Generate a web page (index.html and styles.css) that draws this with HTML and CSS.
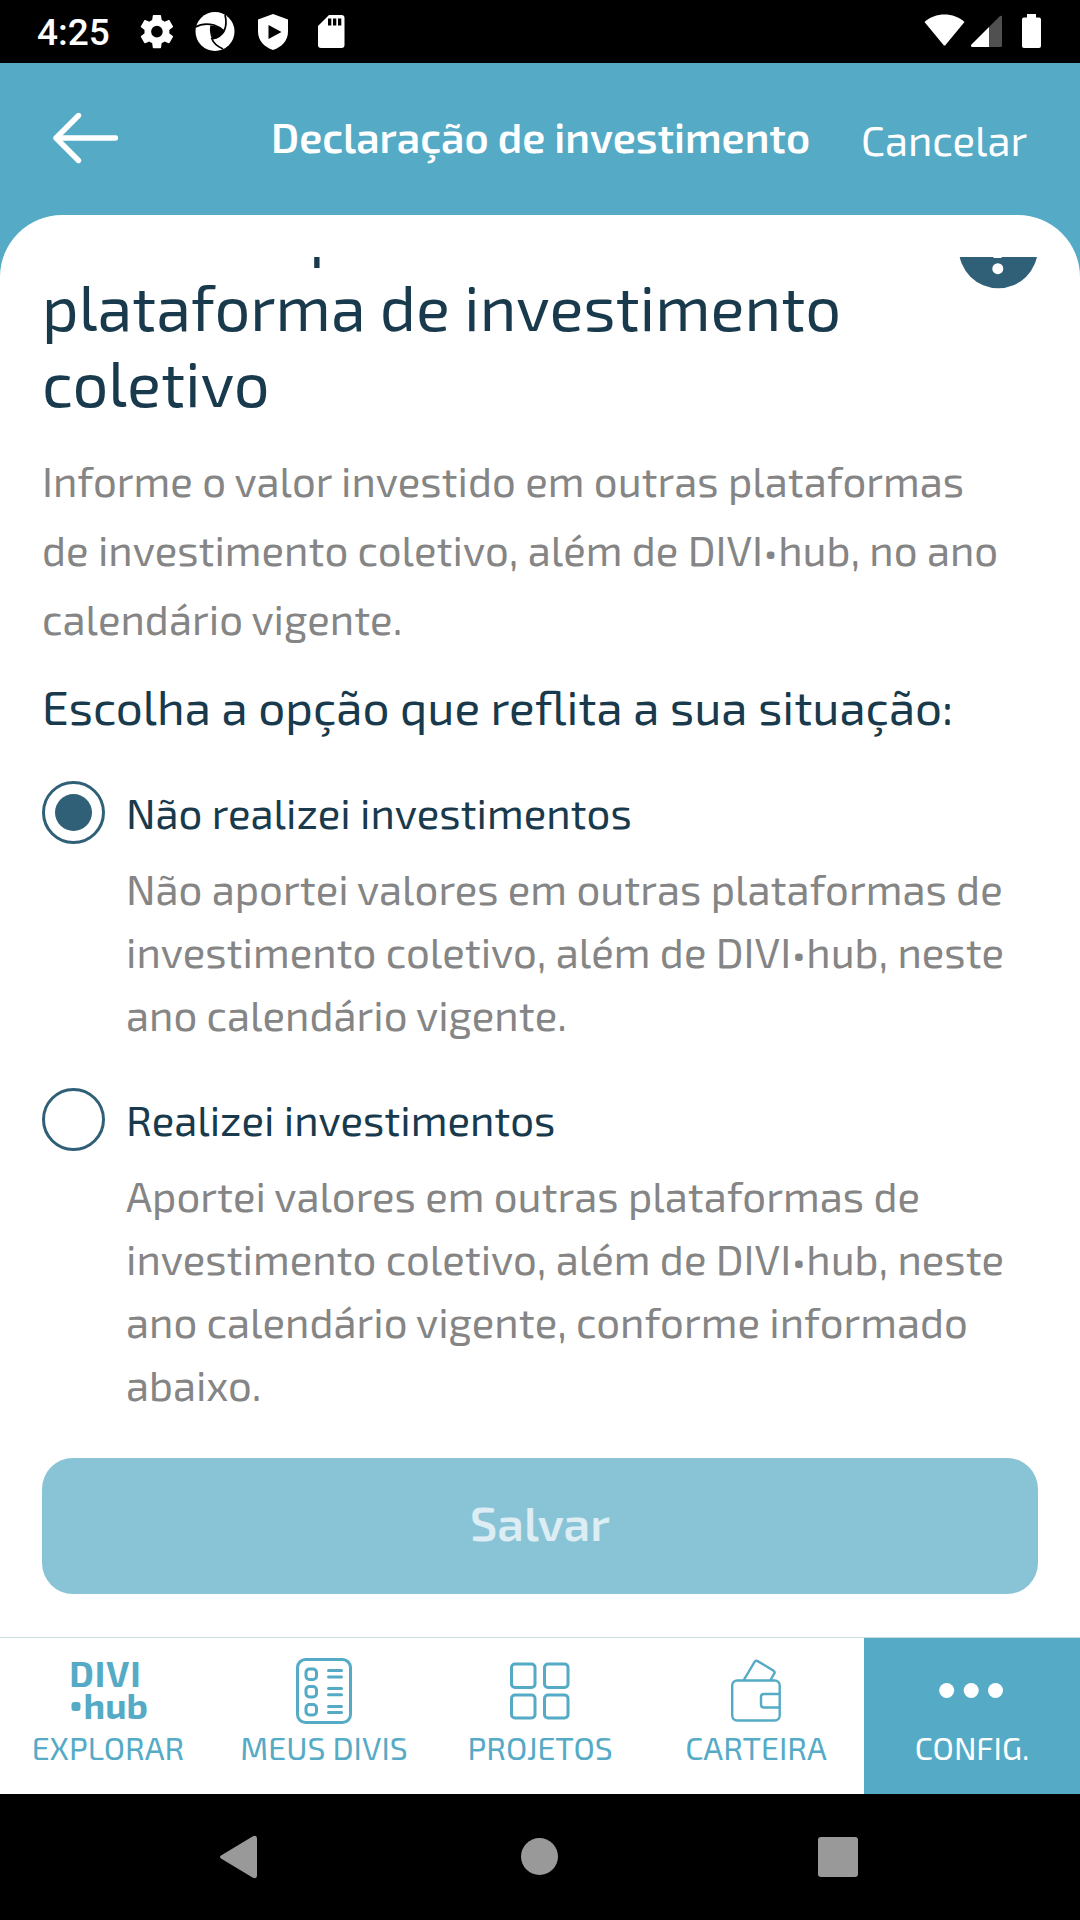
FILE: index.html
```html
<!DOCTYPE html>
<html lang="pt-BR">
<head>
<meta charset="utf-8">
<title>Declaração de investimento</title>
<link rel="stylesheet" href="styles.css">
</head>
<body>
<div class="screen">
  <div class="status">
    <span class="clock">4:25</span>
    <svg class="status-left" width="220" height="63" viewBox="130 0 220 63">
      <g fill="#fff">
        <path transform="translate(137 11.700) scale(1.66)" d="M19.43 12.98c.04-.32.07-.64.07-.98s-.03-.66-.07-.98l2.110-1.650c.19-.15.24-.42.12-.64l-2-3.460c-.12-.22-.39-.3-.61-.22l-2.490 1c-.52-.4-1.080-.73-1.690-.98l-.38-2.650C14.460 2.180 14.250 2 14 2h-4c-.25 0-.46.18-.49.42l-.38 2.650c-.61.25-1.170.59-1.690.98l-2.490-1c-.23-.09-.49 0-.61.22l-2 3.460c-.13.22-.07.49.12.64l2.110 1.650c-.04.32-.07.65-.07.98s.03.66.07.98l-2.110 1.650c-.19.15-.24.42-.12.64l2 3.460c.12.22.39.3.61.22l2.490-1c.52.4 1.080.73 1.690.98l.38 2.650c.03.24.24.42.49.42h4c.25 0 .46-.18.49-.42l.38-2.650c.61-.25 1.170-.59 1.690-.98l2.490 1c.23.09.49 0 .61-.22l2-3.460c.12-.22.07-.49-.12-.64zM12 15.500A3.500 3.500 0 1 1 12 8.500a3.500 3.500 0 0 1 0 7z"/>
        <circle cx="215" cy="31.500" r="19.500"/>
        <path d="M273 14l15 5.500v12c0 9-6 15.500-15 18.500-9-3-15-9.500-15-18.500v-12z"/>
        <path d="M329 15h12.500a3 3 0 0 1 3 3v27a3 3 0 0 1-3 3h-20.500a3 3 0 0 1-3-3V26z"/>
      </g>
      <g fill="#000">
        <path d="M210.300 25.500Q218 25.500 224 31Q221 37 212 39Q209 32 210.300 25.500z"/>
        <path d="M268.500 25l13 7-13 7z"/>
        <path d="M328 18.500h3.300v7H328zM333 18.500h3.300v7H333zM338 18.500h3.300v7H338z"/>
      </g>
      <g fill="none" stroke="#000" stroke-width="1.700">
        <path d="M195.500 27Q203 22.500 214 25Q220 27 224 31Q227.500 24 225 15M211.500 38Q214 45 223 49M224 31Q221 37 212 39"/>
      </g>
    </svg>
    <svg class="status-right" width="130" height="63" viewBox="920 0 130 63">
      <path d="M924.500 22C935 12 954 12 964.500 22L945.500 45q-1 1-2 0z" fill="#fff"/>
      <path d="M989 27l11-11q2-1 2 1v28.500q0 1.500-1.500 1.500H989z" fill="#505050"/>
      <path d="M989 27v20h-16.500q-2.500-.5-1-2.500z" fill="#fff"/>
      <path d="M1027 14h9v3.500h3q2 0 2 2V46q0 2-2 2h-15q-2 0-2-2V19.500q0-2 2-2h3z" fill="#fff"/>
    </svg>
  </div>

  <header class="header">
    <svg class="back" width="66" height="52" viewBox="0 0 66 52" fill="none" stroke="#fff" stroke-width="5.400" stroke-linecap="round" stroke-linejoin="round">
      <path d="M63.500 26H4M26.500 3.500L4 26l22.500 22.500"/>
    </svg>
    <h2 class="title">Declaração de investimento</h2>
    <a class="cancel">Cancelar</a>
  </header>

  <main class="sheet">
    <div class="scroll">
      <div class="heading-row">
        <h1 class="heading"><span class="lead">Investido por</span><br>plataforma de investimento<br>coletivo</h1>
        <svg class="info" width="80" height="80" viewBox="0 0 80 80">
          <circle cx="40.300" cy="39.700" r="39.500" fill="#306077"/>
          <path d="M35.500 18h8v31h-8z" fill="#fff"/>
          <circle cx="39.800" cy="59.700" r="5.500" fill="#fff"/>
        </svg>
      </div>
      <p class="intro">Informe o valor investido em outras plataformas<br>de investimento coletivo, além de DIVI•hub, no ano<br>calendário vigente.</p>
      <h3 class="question">Escolha a opção que reflita a sua situação:</h3>
      <div class="option">
        <span class="radio checked"></span>
        <div class="option-text">
          <p class="option-title">Não realizei investimentos</p>
          <p class="option-desc">Não aportei valores em outras plataformas de<br>investimento coletivo, além de DIVI•hub, neste<br>ano calendário vigente.</p>
        </div>
      </div>
      <div class="option">
        <span class="radio"></span>
        <div class="option-text">
          <p class="option-title">Realizei investimentos</p>
          <p class="option-desc">Aportei valores em outras plataformas de<br>investimento coletivo, além de DIVI•hub, neste<br>ano calendário vigente, conforme informado<br>abaixo.</p>
        </div>
      </div>
      <button class="save" disabled>Salvar</button>
    </div>
  </main>

  <nav class="tabs">
    <a class="tab">
      <svg width="80" height="70" viewBox="68 1655 80 70" fill="#55aac5">
        <text class="logo" x="69.300" y="1686.700" textLength="71.500">DIVI</text>
        <text class="logo" x="83.500" y="1718.700">hub</text>
        <rect x="71.500" y="1702" width="9" height="9" rx="3"/>
      </svg>
      <span>EXPLORAR</span>
    </a>
    <a class="tab">
      <svg width="60" height="70" viewBox="294 1655 60 70" fill="none" stroke="#55aac5" stroke-width="3">
        <rect x="297.500" y="1659.500" width="53" height="63" rx="8"/>
        <g>
          <rect x="306" y="1669" width="10.500" height="10.500" rx="3.500"/>
          <rect x="306" y="1686.500" width="10.500" height="10.500" rx="3.500"/>
          <rect x="306" y="1704.500" width="10.500" height="10.500" rx="3.500"/>
        </g>
        <path stroke-linecap="round" d="M328.500 1670.500h13M328.500 1677h13M328.500 1688.500h13M328.500 1694.700h13M328.500 1706.500h13M328.500 1712.500h13"/>
      </svg>
      <span>MEUS DIVIS</span>
    </a>
    <a class="tab">
      <svg width="64" height="70" viewBox="508 1655 64 70" fill="none" stroke="#55aac5" stroke-width="3">
        <rect x="511.500" y="1664" width="23.500" height="23.500" rx="3.500"/>
        <rect x="544.500" y="1664" width="23.500" height="23.500" rx="3.500"/>
        <rect x="511.500" y="1695" width="23.500" height="23" rx="3.500"/>
        <rect x="544.500" y="1695" width="23.500" height="23" rx="3.500"/>
      </svg>
      <span>PROJETOS</span>
    </a>
    <a class="tab">
      <svg width="56" height="70" viewBox="728 1655 56 70" fill="none" stroke="#55aac5" stroke-width="2.400">
        <rect x="732.200" y="1680.500" width="47.500" height="40" rx="5"/>
        <path d="M779.500 1694h-15.500q-3 0-3 3v7.500q0 3 3 3h15.500M743.500 1680.500l11.200-18.800q1.300-1.500 3-.6l15.800 9.600q1.800 1.300.8 2.800l-4 7"/>
      </svg>
      <span>CARTEIRA</span>
    </a>
    <a class="tab active">
      <svg width="70" height="70" viewBox="937 1655 70 70" fill="#fff">
        <circle cx="946.700" cy="1690.500" r="7.500"/><circle cx="971.200" cy="1690.500" r="7.500"/><circle cx="995.500" cy="1690.500" r="7.500"/>
      </svg>
      <span>CONFIG.</span>
    </a>
  </nav>

  <div class="sysnav">
    <svg width="1080" height="126" viewBox="0 1794 1080 126" fill="#999">
      <path d="M221 1855.500l31.500-19q4.500-2 4.500 2v37q0 4-4.500 2l-31.500-19q-2-1.500 0-3z"/>
      <circle cx="539.500" cy="1856.500" r="18.500"/>
      <rect x="818" y="1837" width="40" height="40" rx="3"/>
    </svg>
  </div>
</div>
</body>
</html>
```
FILE: styles.css
```css
* { box-sizing: border-box; margin: 0; padding: 0; }

body {
  width: 1080px;
  background: #fff;
  font: 400 41.95px/63px "Exo 2", Roboto, "Noto Sans", sans-serif;
  color: #183a4c;
}

.screen {
  display: flex;
  flex-direction: column;
  width: 1080px;
  height: 1920px;
  overflow: hidden;
  background: #55aac5;
}

.status {
  display: flex;
  flex: none;
  height: 63px;
  background: #000;
  color: #fff;
}

.clock {
  width: 130px;
  padding-left: 37px;
  font: 500 37px/66px Roboto, sans-serif;
}

.status-right { margin-left: auto; margin-right: 30px; }

.header {
  display: flex;
  flex: none;
  align-items: center;
  height: 152px;
  padding: 0 50px 0 52px;
  color: #fff;
}

.back { flex: none; margin-bottom: 2px; }

.title {
  margin-left: 153px;
  width: 590px;
  padding-bottom: 6px;
  font-size: 41.7px;
  font-weight: 600;
}

.cancel { white-space: nowrap; }

.sheet {
  flex: 1;
  min-height: 0;
  padding: 42px 42px 0;
  border-radius: 62px 62px 0 0;
  background: #fff;
}

.scroll { height: 100%; overflow: hidden; }

.heading-row {
  display: flex;
  justify-content: space-between;
  margin-top: -65px;
}

.heading {
  font-size: 63.2px;
  font-weight: 400;
  line-height: 76px;
}

.lead { letter-spacing: -1.1px; }

.info { flex: none; margin: 17px 0 0; }

.intro {
  margin-top: 26px;
  line-height: 69px;
  color: #858585;
}

.question {
  margin-top: 24px;
  font-size: 47.65px;
  font-weight: 400;
  line-height: 58px;
}

.option {
  display: flex;
  gap: 21px;
  margin-top: 42px;
}

.question + .option { margin-top: 46px; }

.radio {
  display: grid;
  flex: none;
  place-items: center;
  width: 63px;
  height: 63px;
  border: 3px solid #306077;
  border-radius: 50%;
}

.radio.checked::before {
  content: "";
  width: 37px;
  height: 37px;
  border-radius: 50%;
  background: #306077;
}

.option-text { white-space: nowrap; }

.option-desc { margin-top: 13px; color: #858585; }

.save {
  display: block;
  width: 100%;
  height: 136px;
  margin-top: 42px;
  padding-bottom: 6px;
  border: 0;
  border-radius: 31px;
  background: #89c3d6;
  color: #dcedf3;
  font: 600 47.5px/130px "Exo 2", Roboto, "Noto Sans", sans-serif;
}

.tabs {
  display: grid;
  flex: none;
  grid-template-columns: repeat(5, 1fr);
  height: 157px;
  border-top: 1px solid #c8dcdf;
  background: #fff;
}

.tab {
  display: flex;
  flex-direction: column;
  align-items: center;
  padding-top: 17px;
  color: #55aac5;
  font-size: 31.9px;
  line-height: 40px;
}

.tab span { margin-top: 2px; }
.logo { font-size: 36px; font-weight: 700; }

.tab.active { background: #55aac5; color: #fff; }

.sysnav { flex: none; height: 126px; background: #000; }
.sysnav svg { display: block; }
```
